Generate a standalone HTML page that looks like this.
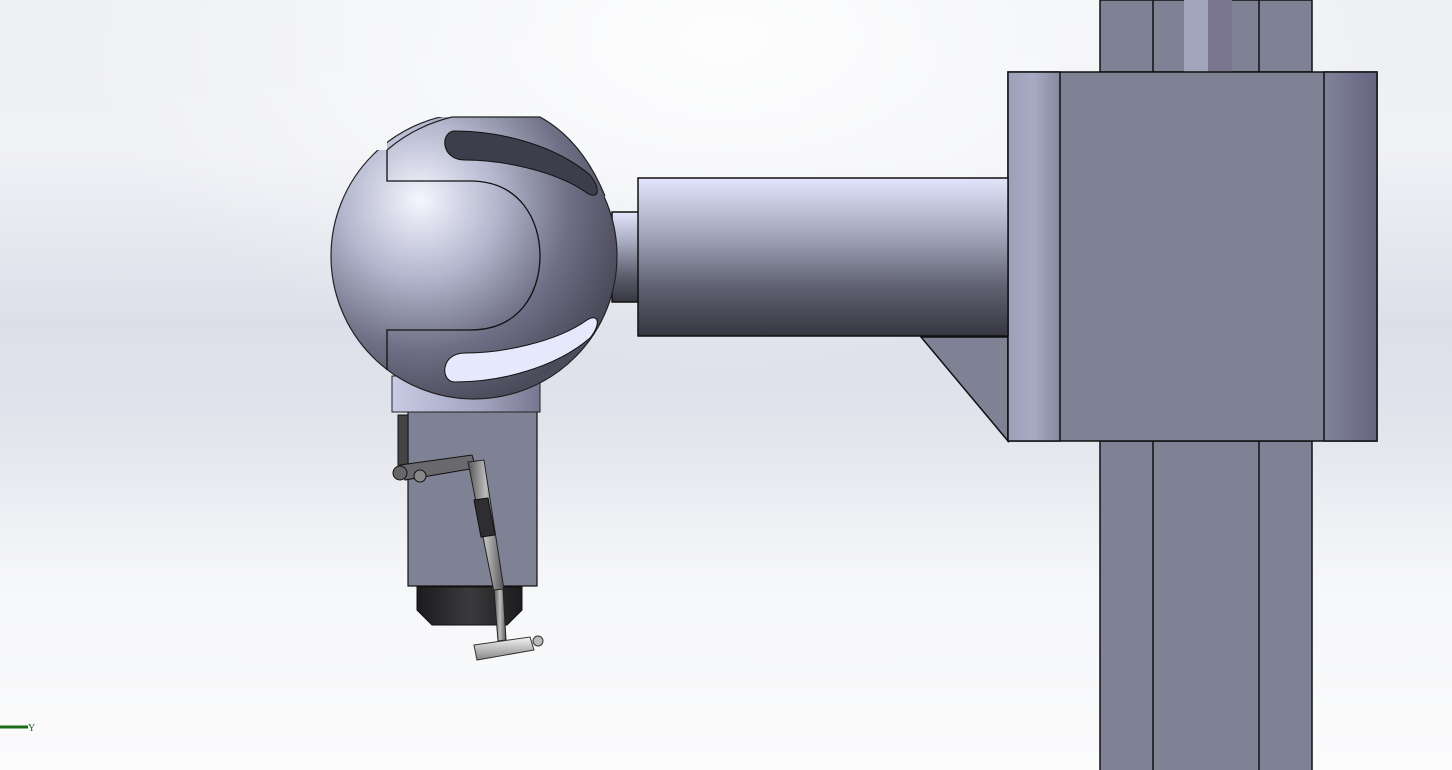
<!DOCTYPE html>
<html><head><style>
html,body{margin:0;padding:0;width:1452px;height:770px;overflow:hidden;}
</style></head><body>
<svg width="1452" height="770" viewBox="0 0 1452 770" xmlns="http://www.w3.org/2000/svg">
<defs>
<linearGradient id="bg" x1="0" y1="0" x2="0" y2="1">
<stop offset="0" stop-color="#eef0f4"/>
<stop offset="0.2" stop-color="#f0f1f5"/>
<stop offset="0.42" stop-color="#dcdfe9"/>
<stop offset="0.55" stop-color="#e2e4ec"/>
<stop offset="0.75" stop-color="#f6f7f9"/>
<stop offset="1" stop-color="#fbfbfc"/>
</linearGradient>
<radialGradient id="bgw" cx="0.5" cy="0.05" r="0.45">
<stop offset="0" stop-color="#ffffff" stop-opacity="0.9"/>
<stop offset="1" stop-color="#ffffff" stop-opacity="0"/>
</radialGradient>
<linearGradient id="arm" x1="0" y1="0" x2="0" y2="1">
<stop offset="0" stop-color="#e2e5fb"/>
<stop offset="0.35" stop-color="#a4a8bc"/>
<stop offset="0.7" stop-color="#5e6070"/>
<stop offset="1" stop-color="#363641"/>
</linearGradient>
<radialGradient id="ball" gradientUnits="userSpaceOnUse" cx="420" cy="200" r="250">
<stop offset="0" stop-color="#f4f6ff"/>
<stop offset="0.3" stop-color="#b6b9cf"/>
<stop offset="0.6" stop-color="#6e6f85"/>
<stop offset="0.85" stop-color="#4a4a5a"/>
<stop offset="1" stop-color="#5d5a72"/>
</radialGradient>
<linearGradient id="lstrip" x1="0" y1="0" x2="1" y2="0">
<stop offset="0" stop-color="#9ca0b8"/><stop offset="0.5" stop-color="#a6aac2"/><stop offset="1" stop-color="#868aa0"/>
</linearGradient>
<linearGradient id="rstrip" x1="0" y1="0" x2="1" y2="0">
<stop offset="0" stop-color="#80839a"/><stop offset="1" stop-color="#676480"/>
</linearGradient>
<linearGradient id="base" x1="0" y1="0" x2="1" y2="0">
<stop offset="0" stop-color="#c8cbe4"/><stop offset="0.6" stop-color="#a3a5c0"/><stop offset="1" stop-color="#7a7690"/>
</linearGradient>
<linearGradient id="cap" x1="0" y1="0" x2="1" y2="0">
<stop offset="0" stop-color="#1c1c1e"/><stop offset="0.5" stop-color="#3a3a3c"/><stop offset="1" stop-color="#1c1c1e"/>
</linearGradient>
<linearGradient id="rod" x1="0" y1="0" x2="1" y2="0">
<stop offset="0" stop-color="#555"/><stop offset="0.5" stop-color="#bdbdbd"/><stop offset="1" stop-color="#555"/>
</linearGradient>
<linearGradient id="tee" x1="0" y1="0" x2="0" y2="1">
<stop offset="0" stop-color="#f4f4f4"/><stop offset="1" stop-color="#888"/>
</linearGradient>
<clipPath id="bc"><path d="M300,150 L387,150 L387,117 L700,117 L700,420 L300,420 Z"/></clipPath>
</defs>
<rect width="1452" height="770" fill="url(#bg)"/>
<rect width="1452" height="770" fill="url(#bgw)"/>

<g stroke="#111" stroke-width="1.5">
<rect x="1100" y="0" width="212" height="72" fill="#7e8294"/>
<rect x="1184" y="0" width="24" height="72" fill="#a2a6bc" stroke="none"/>
<rect x="1208" y="0" width="24" height="72" fill="#7a7690" stroke="none"/>
<line x1="1153" y1="0" x2="1153" y2="72"/><line x1="1259" y1="0" x2="1259" y2="72"/>
<rect x="1100" y="441" width="212" height="335" fill="#7e8294"/>
<line x1="1153" y1="441" x2="1153" y2="770"/><line x1="1259" y1="441" x2="1259" y2="770"/>
<polygon points="921,337 1008,337 1008,441" fill="#7e8294"/>
<rect x="1008" y="72" width="369" height="369" fill="#7e8294"/>
<rect x="1008" y="72" width="52" height="369" fill="url(#lstrip)"/>
<rect x="1324" y="72" width="53" height="369" fill="url(#rstrip)"/>
<rect x="612" y="212" width="27" height="90" fill="url(#arm)"/>
<rect x="638" y="178" width="370" height="158" fill="url(#arm)"/>
</g>

<rect x="408" y="410" width="129" height="176" fill="#7e8294" stroke="#111" stroke-width="1.2"/>
<path d="M417,587 H522 V610 L507,625 H432 L417,610 Z" fill="url(#cap)" stroke="#111"/>
<rect x="392" y="376" width="148" height="36" fill="url(#base)" stroke="#222"/>

<!-- ball -->
<g clip-path="url(#bc)">
<circle cx="474" cy="256" r="143" fill="url(#ball)" stroke="#222" stroke-width="1.2"/>
</g>
<path d="M387,181 V150 Q415,126 452,117 H540 Q582,140 605,196 L560,220 L387,181 Z" fill="url(#ball)"/>
<path d="M387,150 Q415,126 452,117 H540 Q582,140 605,196" fill="none" stroke="#222" stroke-width="1.2"/>
<path d="M387,150 V181 H470 C520,181 540,220 540,256 C540,292 520,330 470,330 H387 V370" fill="none" stroke="#111" stroke-width="1.3"/>
<path d="M455,131 C500,131 555,145 590,175 C602,190 598,200 587,193 C555,170 500,160 465,160 C440,160 440,131 455,131 Z" fill="#3d3e4c" stroke="#111"/>
<path d="M455,382 C500,382 555,368 590,338 C602,323 598,313 587,320 C555,343 500,353 465,353 C440,353 440,382 455,382 Z" fill="#e6e8fb" stroke="#111"/>

<path d="M398,415 H408 V470 H398 Z" fill="#444" stroke="#111"/>
<path d="M400,465 L472,455 L476,468 L405,480 Z" fill="#6a6a6e" stroke="#111"/>
<circle cx="400" cy="473" r="7" fill="#666" stroke="#111"/>
<circle cx="420" cy="476" r="6" fill="#888" stroke="#111"/>
<path d="M468,462 L484,460 L504,590 L494,592 Z" fill="url(#rod)" stroke="#222"/>
<path d="M474,500 L488,498 L495,535 L481,537 Z" fill="#2e2e32" stroke="#111"/>
<path d="M494,590 L503,589 L506,640 L498,641 Z" fill="url(#rod)" stroke="#222"/>
<path d="M474,645 L530,637 L534,650 L477,660 Z" fill="url(#tee)" stroke="#333"/>
<circle cx="538" cy="641" r="5" fill="#bbb" stroke="#333"/>

<line x1="0" y1="727" x2="28" y2="727" stroke="#1a6a1a" stroke-width="3"/>
<text x="28" y="731" font-family="Liberation Serif, serif" font-size="10" fill="#1a6a1a">Y</text>
</svg>
</body></html>
